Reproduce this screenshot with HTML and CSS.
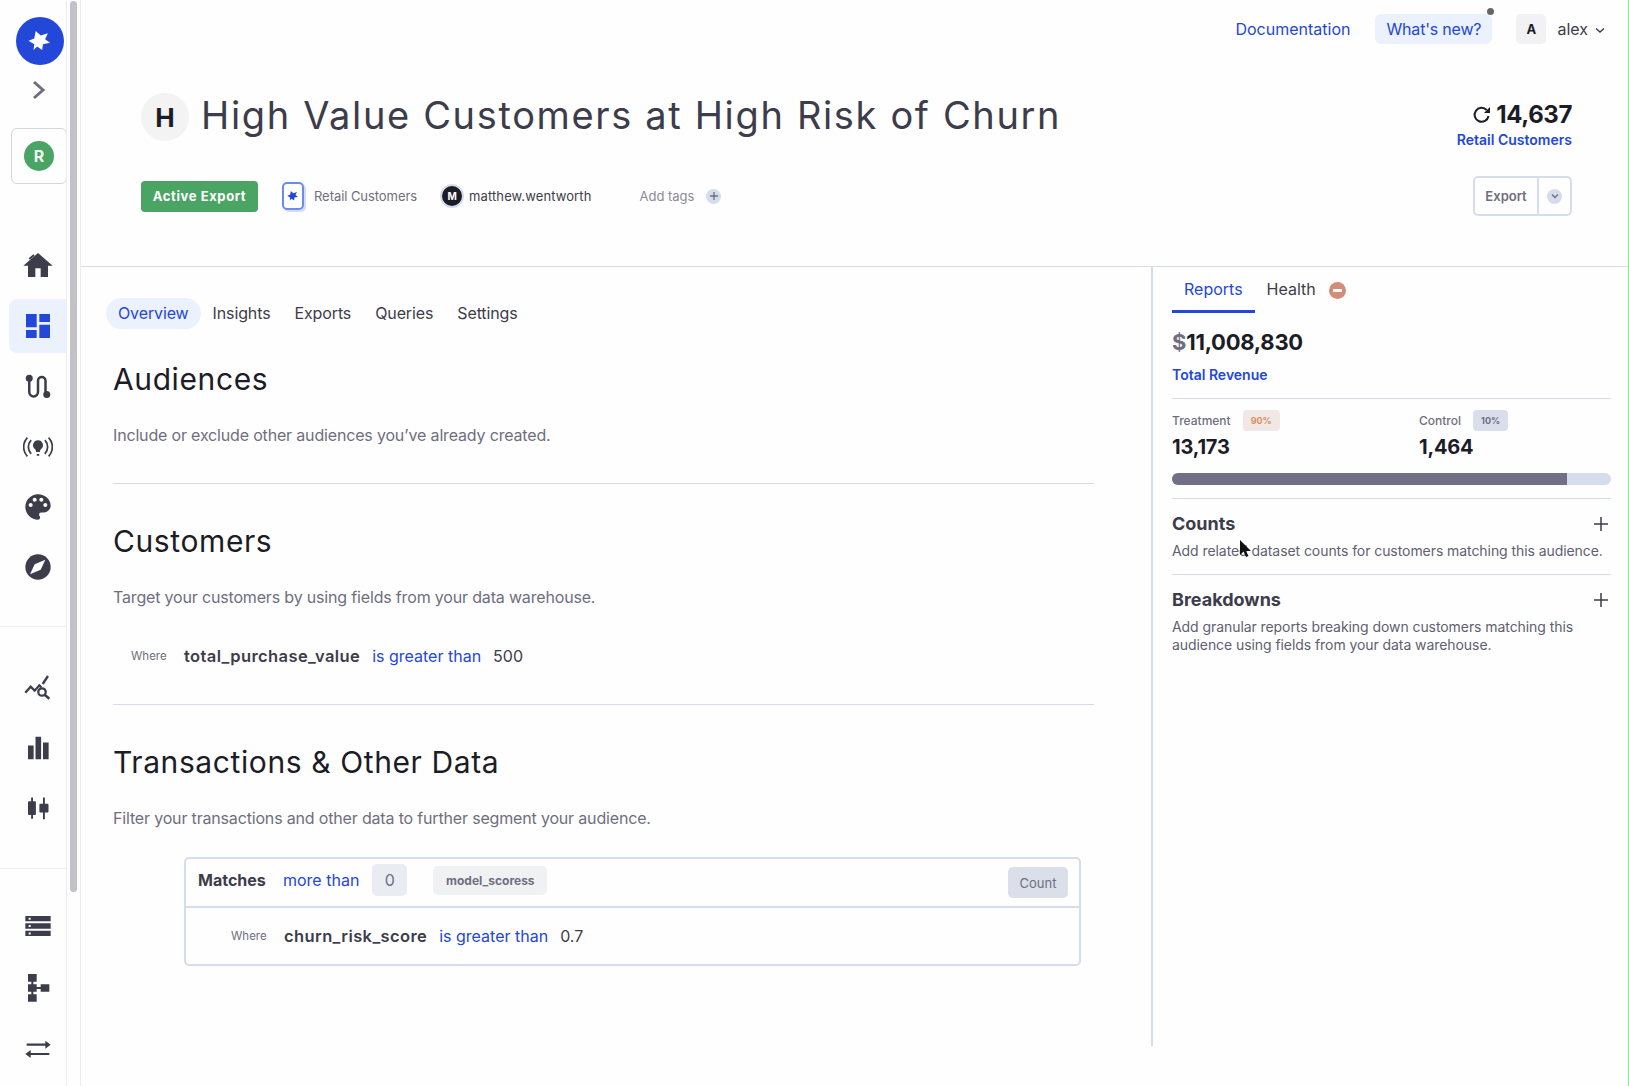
FILE: index.html
```html
<!DOCTYPE html>
<html lang="en">
<head>
<meta charset="utf-8">
<title>High Value Customers at High Risk of Churn</title>
<link rel="stylesheet" href="styles.css">
</head>
<body>
<div class="app">
  <aside class="sidebar">
    <div class="logo"><svg width="28" height="28" viewBox="0 0 26 26"><path fill="#fff" d="M2.300 12.700L7.700 10.700 9 3.700 13.700 8 20.300 5.700 17.700 11.300 22.300 14.700 15.700 16 15 21.300 10.300 18 7 21.300 7.700 16z"/></svg></div>
    <div class="expand"><svg width="16" height="20" viewBox="0 0 16 20"><path d="M3 2l9 8-9 8" fill="none" stroke="#6f6e80" stroke-width="3"/></svg></div>
    <div class="workspace"><span class="workspace-badge">R</span></div>
    <nav class="nav-group first">
      <a class="nav-item"><svg width="32" height="32" viewBox="0 0 24 24"><path d="M10 21v-6.500h4V21h5.500v-8.500H23L12 3 1 12.500h3.500V21z"/><path d="M5.500 7.500L9 4.500" stroke="#3d3c4a" stroke-width="1.500"/></svg></a>
      <a class="nav-item active"><svg width="32" height="32" viewBox="0 0 24 24"><path d="M3 13h8V3H3v10zm0 8h8v-6H3v6zm10 0h8V11h-8v10zm0-18v6h8V3h-8z"/></svg></a>
      <a class="nav-item"><svg width="30" height="30" viewBox="0 0 24 24"><path d="M5 6v10a3.500 3.500 0 0 0 7 0V7a3 3 0 0 1 6 0v10" fill="none" stroke="#3d3c4a" stroke-width="2"/><circle cx="5" cy="5" r="2.800"/><circle cx="19" cy="18" r="2.800"/></svg></a>
      <a class="nav-item"><svg width="30" height="30" viewBox="0 0 24 24"><path d="M12 6.500a4 4 0 0 0-2.500 7.100c.5.500 1 1.400 1 2.400h3c0-1 .5-1.900 1-2.400A4 4 0 0 0 12 6.500zM11 17.500h2V19h-2z"/><path d="M6.500 6.500a8 8 0 0 0 0 11M17.500 6.500a8 8 0 0 1 0 11M3.500 4.500a11 11 0 0 0 0 15M20.500 4.500a11 11 0 0 1 0 15" fill="none" stroke="#3d3c4a" stroke-width="1.400"/></svg></a>
      <a class="nav-item"><svg width="32" height="32" viewBox="0 0 24 24"><path d="M12 2.500c-5.200 0-9.500 4.300-9.500 9.500s4.300 9.500 9.500 9.500c.9 0 1.600-.7 1.600-1.600 0-.4-.2-.8-.4-1.100-.3-.3-.4-.6-.4-1 0-.9.700-1.600 1.600-1.600H16c2.900 0 5.500-2.300 5.500-5.200 0-4.600-4.300-8.500-9.500-8.500zm-5.500 9.500c-.8 0-1.500-.7-1.500-1.500S5.700 9 6.500 9 8 9.700 8 10.500 7.300 12 6.500 12zm3-4C8.700 8 8 7.300 8 6.500S8.700 5 9.500 5s1.500.7 1.500 1.500S10.300 8 9.500 8zm5 0c-.8 0-1.500-.7-1.500-1.500S13.700 5 14.500 5s1.500.7 1.500 1.500S15.300 8 14.500 8zm3 4c-.8 0-1.500-.7-1.500-1.500S16.700 9 17.500 9s1.500.7 1.500 1.500-.7 1.500-1.500 1.500z"/></svg></a>
      <a class="nav-item"><svg width="32" height="32" viewBox="0 0 24 24"><circle cx="12" cy="12" r="9.500"/><path fill="#fff" d="M17.500 6.500l-3.500 7.500-8 3.500 3.500-7.500z"/></svg></a>
    </nav>
    <nav class="nav-group">
      <a class="nav-item"><svg width="32" height="32" viewBox="0 0 24 24"><path d="M2.500 15.500l4-4.500 3 3 3.500-4 1.500 1.500M15.500 9l4-6" fill="none" stroke="#3d3c4a" stroke-width="1.700"/><circle cx="15" cy="15" r="2.800" fill="none" stroke="#3d3c4a" stroke-width="1.700"/><path d="M17 17l3.500 3" stroke="#3d3c4a" stroke-width="1.900"/></svg></a>
      <a class="nav-item"><svg width="30" height="30" viewBox="0 0 24 24"><path d="M4 10h4.500v11H4zM10 3h4.500v18H10zM16 7.500h4.500V21H16z"/></svg></a>
      <a class="nav-item"><svg width="30" height="30" viewBox="0 0 24 24"><path d="M5 6.500h1.500V3.500h1.500v3h1.500c.5 0 .8.400.8.800v9.400c0 .4-.3.800-.8.800H8v3H6.500v-3H5c-.5 0-1-.4-1-.8V7.300c0-.4.500-.8 1-.8zM16 3.500h1.500v5h2c.5 0 .9.400.9.800v5.400c0 .4-.4.800-.9.800h-2v5.500H16v-5.500h-2c-.5 0-.9-.4-.9-.8V9.300c0-.4.400-.8.900-.8h2z"/></svg></a>
    </nav>
    <nav class="nav-group last">
      <a class="nav-item"><svg width="32" height="32" viewBox="0 0 24 24"><path fill-rule="evenodd" d="M2.500 4.500h19v4h-19zM5 5.800v1.500h1.500V5.800zM2.500 10h19v4h-19zM5 11.300v1.500h1.500v-1.500zM2.500 15.500h19v4h-19zM5 16.800v1.500h1.500v-1.500z"/></svg></a>
      <a class="nav-item"><svg width="32" height="32" viewBox="0 0 24 24"><path d="M4.500 2.200H11V8H4.500zM4.500 10H11v5.500H4.500zM4.500 17.500H11V23H4.500zM14 10h6.500v5.500H14zM11 12h3v1.500h-3zM7 8h1.500v2H7zM7 15.500h1.500v2H7z"/></svg></a>
      <a class="nav-item"><svg width="32" height="32" viewBox="0 0 24 24"><path d="M3.500 8.200h14V6l4 3-4 3v-2.200h-14zM20.500 15.200h-14V13l-4 3 4 3v-2.200h14z" transform="translate(0 .5)"/></svg></a>
    </nav>
  </aside>
  <div class="scrollbar"><div class="scroll-thumb"></div></div>
  <main class="main">
    <header class="header">
      <div class="topbar">
        <a class="doc-link">Documentation</a>
        <a class="whats-new">What's new?<span class="dot"></span></a>
        <span class="user-badge">A</span>
        <span class="user-name">alex</span>
        <svg class="user-caret" width="10" height="7" viewBox="0 0 10 7"><path d="M1 1.500l4 3.500 4-3.500" fill="none" stroke="#3d3c4a" stroke-width="1.400"/></svg>
      </div>
      <div class="title-row">
        <div class="title-left">
          <span class="title-badge">H</span>
          <h1 class="title">High Value Customers at High Risk of Churn</h1>
        </div>
        <div class="count-block">
          <div class="count"><svg width="20" height="20" viewBox="0 0 20 20"><path d="M16.500 11a7 7 0 1 1-1.800-6" fill="none" stroke="#1c1c26" stroke-width="2"/><path d="M18 2v6h-6z" fill="#1c1c26"/></svg>14,637</div>
          <a class="count-label">Retail Customers</a>
        </div>
      </div>
      <div class="meta-row">
        <div class="meta-left">
          <span class="status">Active Export</span>
          <span class="dataset-icon"><svg width="14" height="14" viewBox="0 0 26 26"><path fill="#2347d8" d="M2.300 12.700L7.700 10.700 9 3.700 13.700 8 20.300 5.700 17.700 11.300 22.300 14.700 15.700 16 15 21.300 10.300 18 7 21.300 7.700 16z"/></svg></span>
          <span class="dataset-name">Retail Customers</span>
          <span class="owner-badge">M</span>
          <span class="owner-name">matthew.wentworth</span>
          <span class="add-tags">Add tags</span>
          <span class="add-icon"><svg width="8" height="8" viewBox="0 0 8 8"><path d="M4 0v8M0 4h8" stroke="#6f6e80" stroke-width="1.300"/></svg></span>
        </div>
        <div class="export-btn">
          <span class="export-label">Export</span>
          <span class="export-caret"><span class="caret-circle"><svg width="8" height="6" viewBox="0 0 8 6"><path d="M1 1.500l3 3 3-3" fill="none" stroke="#6f6e80" stroke-width="1.300"/></svg></span></span>
        </div>
      </div>
    </header>
    <div class="body">
      <section class="content">
        <div class="tabs">
          <a class="tab selected">Overview</a>
          <a class="tab">Insights</a>
          <a class="tab">Exports</a>
          <a class="tab">Queries</a>
          <a class="tab">Settings</a>
        </div>
        <div class="block">
          <h2 class="block-title">Audiences</h2>
          <p class="block-desc">Include or exclude other audiences you’ve already created.</p>
        </div>
        <div class="block">
          <h2 class="block-title">Customers</h2>
          <p class="block-desc">Target your customers by using fields from your data warehouse.</p>
          <div class="rule-row">
            <span class="where">Where</span>
            <span class="field">total_purchase_value</span>
            <span class="op">is greater than</span>
            <span class="val">500</span>
          </div>
        </div>
        <div class="block plain">
          <h2 class="block-title">Transactions &amp; Other Data</h2>
          <p class="block-desc">Filter your transactions and other data to further segment your audience.</p>
          <div class="match-box">
            <div class="match-head">
              <span class="match-word">Matches</span>
              <span class="op">more than</span>
              <span class="zero">0</span>
              <span class="dataset-pill">model_scoress</span>
              <span class="count-pill">Count</span>
            </div>
            <div class="match-body">
              <span class="where">Where</span>
              <span class="field">churn_risk_score</span>
              <span class="op">is greater than</span>
              <span class="val">0.7</span>
            </div>
          </div>
        </div>
      </section>
      <aside class="panel">
        <div class="panel-tabs">
          <a class="panel-tab selected">Reports</a>
          <a class="panel-tab">Health</a>
          <span class="health-icon"></span>
        </div>
        <div class="revenue"><span class="dollar">$</span>11,008,830</div>
        <a class="revenue-label">Total Revenue</a>
        <div class="split">
          <div class="split-col">
            <div class="split-head"><span class="split-name">Treatment</span><span class="pct warm">90%</span></div>
            <div class="split-value">13,173</div>
          </div>
          <div class="split-col">
            <div class="split-head"><span class="split-name">Control</span><span class="pct cool">10%</span></div>
            <div class="split-value">1,464</div>
          </div>
        </div>
        <div class="bar"><div class="bar-fill"></div></div>
        <div class="report">
          <div class="report-head"><h3 class="report-title">Counts</h3><svg width="14" height="14" viewBox="0 0 14 14"><path d="M7 0v14M0 7h14" stroke="#3d3c4a" stroke-width="1.500"/></svg></div>
          <p class="report-desc">Add related dataset counts for customers matching this audience.</p>
        </div>
        <div class="report">
          <div class="report-head"><h3 class="report-title">Breakdowns</h3><svg width="14" height="14" viewBox="0 0 14 14"><path d="M7 0v14M0 7h14" stroke="#3d3c4a" stroke-width="1.500"/></svg></div>
          <p class="report-desc">Add granular reports breaking down customers matching this audience using fields from your data warehouse.</p>
        </div>
      </aside>
    </div>
  </main>
</div>
<svg class="cursor" width="11" height="18" viewBox="0 0 11 18"><path d="M0 0v15l3.500-3.500L6 17l2.500-1-2.500-5h5z" fill="#111"/></svg>
</body>
</html>
```
FILE: styles.css
```css
* { box-sizing: border-box; }
html, body { margin: 0; height: 100%; overflow: hidden; }
body { font-family: "Inter", "Liberation Sans", sans-serif; color: #3d3c4a; background: #fefefe; }
a { text-decoration: none; }
h1, h2, h3, p { margin: 0; font-weight: 400; }
.app { display: flex; height: 1086px; }

.sidebar { width: 67px; flex: none; height: 1086px; overflow: hidden; border-right: 1px solid #ececf0; padding-top: 17px; display: flex; flex-direction: column; }
.sidebar > * { flex: none; }
.logo { width: 48px; height: 48px; margin-left: 16px; border-radius: 50%; background: #2347d8; display: flex; align-items: center; justify-content: center; }
.expand { height: 20px; margin-top: 15px; padding-left: 11px; display: flex; justify-content: center; }
.workspace { width: 56px; height: 56px; margin: 28px 0 0 11px; border: 1px solid #d5d5dc; border-radius: 6px; display: flex; align-items: center; justify-content: center; }
.workspace-badge { width: 30px; height: 30px; border-radius: 50%; background: #4aa564; color: #eef6f0; font-size: 16px; font-weight: 700; display: flex; align-items: center; justify-content: center; }
.nav-group { padding: 31px 0 30px; border-bottom: 1px solid #f0f0f3; }
.nav-group.first { margin-top: 19px; padding: 32px 0 29px; }
.nav-group.last { border-bottom: 0; padding-top: 26px; }
.nav-item { height: 60px; display: flex; align-items: center; justify-content: center; width: 58px; margin-left: 9px; }
.nav-item svg { fill: #3d3c4a; }
.nav-group.last .nav-item { height: 61px; }
.nav-item.active { height: 54px; margin: 4px 0 4px 9px; background: #ebf1fd; border-radius: 8px 0 0 8px; }
.nav-item.active svg { fill: #2347d8; }

.scrollbar { width: 14px; flex: none; border-right: 1px solid #ececf0; padding: 1px 3px 0 3px; }
.scroll-thumb { height: 891px; background: #c1c1c6; border-radius: 4px; }

.main { flex: 1; min-width: 0; display: flex; flex-direction: column; border-right: 1px solid #8fe88f; }

.header { height: 267px; padding: 0 56px 0 60px; border-bottom: 1px solid #d5dcec; flex: none; }
.topbar { height: 58px; margin-right: -33px; display: flex; align-items: center; justify-content: flex-end; font-size: 16px; }
.doc-link { color: #2347d8; margin-right: 25px; }
.whats-new { position: relative; height: 30px; width: 117px; margin-right: 24px; padding-bottom: 1px; border-radius: 6px; background: #ebf1fd; color: #2347d8; letter-spacing: -.2px; display: flex; align-items: center; justify-content: center; }
.dot { position: absolute; top: -6px; right: -2px; width: 7px; height: 7px; border-radius: 50%; background: #666; }
.user-badge { width: 30px; height: 30px; border-radius: 5px; background: #f2f2f4; color: #1c1c26; font-size: 13px; font-weight: 700; display: flex; align-items: center; justify-content: center; }
.user-name { margin: 0 7px 0 11px; color: #3d3c4a; }
.user-caret { margin-top: 2px; }

.title-row { display: flex; justify-content: space-between; margin-top: 35px; height: 48px; }
.title-left { display: flex; align-items: center; }
.title-badge { width: 48px; height: 48px; border-radius: 50%; background: #f3f3f4; color: #1c1c26; font-size: 26px; font-weight: 700; display: flex; align-items: center; justify-content: center; }
.title { margin: 0 0 4px 12px; font-size: 38px; line-height: 44px; letter-spacing: 1.65px; color: #3d3c4a; white-space: nowrap; }
.count-block { display: flex; flex-direction: column; align-items: flex-end; }
.count { display: flex; align-items: center; gap: 4px; font-size: 24px; line-height: 30px; font-weight: 700; letter-spacing: -.4px; color: #1c1c26; margin-top: 7px; }
.count-label { font-size: 14px; line-height: 20px; font-weight: 600; color: #2347d8; }

.meta-row { display: flex; justify-content: space-between; align-items: center; margin-top: 35px; height: 40px; }
.meta-left { display: flex; align-items: center; font-size: 13px; }
.status { width: 117px; height: 31px; border-radius: 4px; background: #4aa564; color: #fff; font-weight: 700; letter-spacing: .6px; display: flex; align-items: center; justify-content: center; }
.dataset-icon { width: 22px; height: 28px; margin-left: 24px; border: 2px solid #6a8cf0; border-radius: 5px; box-shadow: 2px 2px 0 #d5dcec; display: flex; align-items: center; justify-content: center; background: #fff; }
.dataset-name { margin-left: 10px; color: #6f6e80; letter-spacing: -.06px; }
.owner-badge { width: 20px; height: 20px; margin-left: 25px; border-radius: 50%; background: #1c1c26; box-shadow: 0 0 0 2px #d5dcec; color: #fff; font-size: 10px; font-weight: 700; display: flex; align-items: center; justify-content: center; }
.owner-name { margin-left: 7px; color: #3d3c4a; letter-spacing: .1px; }
.add-tags { margin-left: 48px; color: #8c8b99; }
.add-icon { width: 15px; height: 15px; margin-left: 12px; border-radius: 50%; background: #d5dcec; display: flex; align-items: center; justify-content: center; }
.export-btn { width: 99px; height: 40px; border: 2px solid #d5dcec; border-radius: 5px; display: flex; }
.export-label { flex: 1; border-right: 2px solid #d5dcec; font-size: 13px; font-weight: 600; color: #6f6e80; display: flex; align-items: center; justify-content: center; }
.export-caret { width: 31px; display: flex; align-items: center; justify-content: center; }
.caret-circle { width: 15px; height: 15px; border-radius: 50%; background: #d5dcec; display: flex; align-items: center; justify-content: center; }

.body { display: flex; height: 779px; }
.content { width: 1070px; flex: none; padding: 31px 57px 0 32px; }
.tabs { display: flex; align-items: center; height: 31px; margin-left: -7px; font-size: 16px; letter-spacing: -.12px; }
.tab { color: #3d3c4a; padding: 0 12px; line-height: 31px; }
.tab.selected { color: #2347d8; background: #ebf1fd; border-radius: 16px; }
.block { border-bottom: 1px solid #d5dcec; padding-bottom: 36px; }
.block.plain { border-bottom: 0; }
.tabs + .block .block-title { margin-top: 32px; }
.block-title { margin-top: 39px; font-size: 30px; line-height: 36px; letter-spacing: .6px; color: #1c1c26; }
.block-desc { margin-top: 26px; font-size: 16px; line-height: 24px; letter-spacing: -.17px; color: #6f6e80; }
.rule-row { margin-top: 35px; padding-left: 18px; display: flex; align-items: center; line-height: 24px; }
.where { width: 53px; font-size: 11.5px; color: #6f6e80; flex: none; }
.field { font-weight: 600; font-size: 16.5px; letter-spacing: .4px; margin-right: 12px; }
.op { color: #2347d8; font-size: 16px; margin-right: 12px; }
.val { font-size: 16px; }
.match-box { margin: 27px 0 0 71px; width: 897px; height: 109px; border: 2px solid #d5dcec; border-radius: 5px; }
.match-head { height: 49px; padding: 0 12px 5px; border-bottom: 2px solid #d5dcec; display: flex; align-items: center; }
.match-word { font-weight: 700; font-size: 16px; width: 85px; }
.zero { width: 35px; height: 32px; margin-left: 1px; background: #e9ecf2; border-radius: 5px; color: #6f6e80; display: flex; align-items: center; justify-content: center; font-size: 16px; }
.dataset-pill { height: 29px; width: 114px; margin-left: 26px; background: #f0f1f3; border-radius: 5px; color: #6f6e80; font-size: 12px; font-weight: 700; display: flex; align-items: center; justify-content: center; }
.count-pill { margin-left: auto; width: 60px; height: 31px; margin-top: 5px; margin-right: -1px; background: #dadfea; border-radius: 5px; color: #6f6e80; font-size: 13px; display: flex; align-items: center; justify-content: center; }
.match-body { height: 56px; padding-left: 45px; display: flex; align-items: center; }

.panel { flex: none; width: 478px; border-left: 2px solid #d5dcec; padding: 0 18px 0 19px; }
.panel-tabs { height: 46px; display: flex; align-items: center; font-size: 16px; }
.panel-tab { color: #3d3c4a; padding: 0 12px; height: 46px; line-height: 44px; }
.panel-tab.selected { color: #2347d8; border-bottom: 3px solid #2347d8; }
.health-icon { position: relative; width: 17px; height: 17px; margin-left: 1px; border-radius: 50%; background: #d38c78; flex: none; }
.health-icon::after { content: ""; position: absolute; left: 4px; right: 4px; top: 7px; height: 3px; background: #fff; }
.revenue { margin-top: 13px; font-size: 22px; line-height: 32px; font-weight: 700; letter-spacing: -.25px; color: #1c1c26; }
.dollar { color: #6f6e80; }
.revenue-label { display: block; margin-top: 7px; font-size: 14px; line-height: 20px; font-weight: 600; color: #2347d8; }
.split { display: flex; margin-top: 13px; padding-top: 11px; border-top: 1px solid #d5dcec; }
.split-col { width: 247px; flex: none; }
.split-head { display: flex; align-items: center; height: 21px; }
.split-name { font-size: 12px; font-weight: 500; color: #6f6e80; }
.pct { height: 21px; margin-left: 12px; padding: 0 8px; border-radius: 4px; font-size: 9px; font-weight: 700; display: flex; align-items: center; }
.pct.warm { background: #f0e8e4; color: #d98f60; }
.pct.cool { background: #d9deea; color: #6f6e80; }
.split-value { margin-top: 2px; font-size: 20px; line-height: 28px; font-weight: 700; letter-spacing: -.2px; color: #1c1c26; }
.bar { margin-top: 12px; height: 12px; border-radius: 6px; background: #d5dcec; overflow: hidden; }
.bar-fill { width: 90%; height: 100%; background: #716f85; }
.report { margin-top: 13px; padding-top: 13px; border-top: 1px solid #d5dcec; }
.report-head { display: flex; justify-content: space-between; align-items: center; padding-right: 3px; }
.report-title { font-size: 18px; line-height: 24px; font-weight: 700; color: #3d3c4a; }
.report-desc { margin-top: 6px; font-size: 14px; line-height: 18.5px; letter-spacing: -.07px; color: #5f5e72; }

.cursor { position: absolute; left: 1240px; top: 540px; }
```
